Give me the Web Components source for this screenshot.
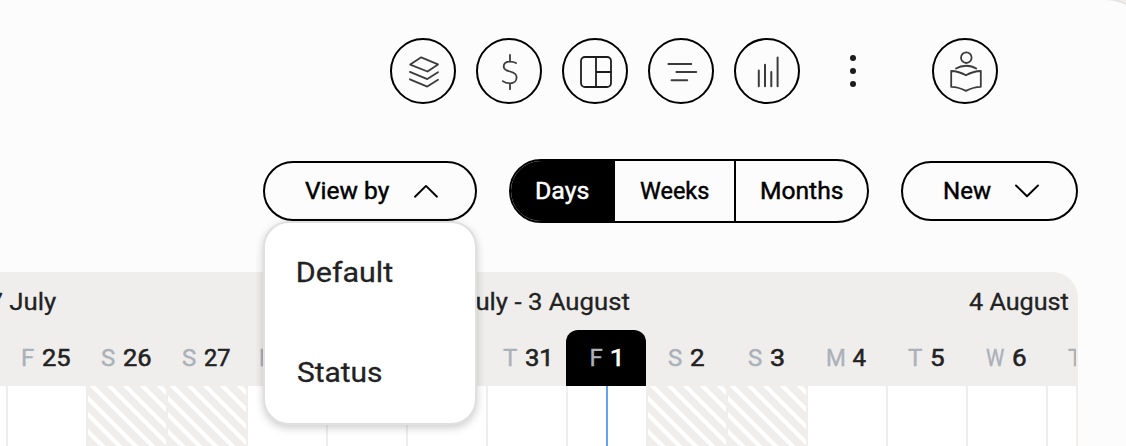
<!DOCTYPE html>
<html lang="en">
<head>
<meta charset="utf-8">
<title>Schedule</title>
<style>
html,body{margin:0;height:100%;overflow:hidden;background:#f3f0ec}
body{font-family:Roboto,"Liberation Sans",sans-serif;color:#000}
</style>
</head>
<body>
<schedule-page></schedule-page>
<script>
const ctx = document.createElement('canvas').getContext('2d');
const define = (name, html, setup) => customElements.define(name, class extends HTMLElement {
  connectedCallback() {
    if (this.shadowRoot) return;
    const t = document.createElement('template');
    t.innerHTML = typeof html === 'function' ? html(this) : html;
    this.attachShadow({mode: 'open'}).append(t.content.cloneNode(true));
    if (setup) setup(this);
  }
});

// Single-line label widened so that its glyphs span the given width.
define('fit-label', `<style>:host{display:block;white-space:pre;flex:none;-webkit-text-stroke:.3px currentColor}span{display:block;width:max-content;transform-origin:0 50%}</style><span><slot></slot></span>`, el => {
  const s = getComputedStyle(el), text = el.textContent, w = +el.getAttribute('w');
  ctx.font = `${s.fontWeight} ${s.fontSize} ${s.fontFamily}`;
  const m = ctx.measureText(text), ink = m.actualBoundingBoxRight + m.actualBoundingBoxLeft;
  const k = Math.min(w / ink, 1.12);
  el.style.width = w + 'px';
  el.shadowRoot.querySelector('span').style.transform = `scaleX(${k}) translateX(${m.actualBoundingBoxLeft}px)`;
});

define('round-button', `<style>
:host{display:flex;box-sizing:border-box;width:66px;height:66px;border:2px solid #000;border-radius:50%;flex:none}
</style><slot></slot>`);

define('line-icon', el => `<style>:host{display:block}svg{display:block;fill:none;stroke:#3c3c3c;stroke-width:1.8;stroke-linecap:round;stroke-linejoin:round}</style>
<svg width="62" height="62" viewBox="2 2 62 62">${{
  layers: '<path d="M31.2 19.3 48 26.4 37.5 33.5 20.2 26.6ZM19.9 33.9 37.3 41.1 48 34.2M19.9 41.3 37.3 48.6 48 41.8"/>',
  dollar: '<path d="M34 17V23.4M34 45.6V51.2M40 25C38 23.9 36 23.6 34 23.6C30 23.6 27.7 25.6 27.7 28.4C27.7 31.5 30.2 32.5 34 33.5C38.2 34.6 40.6 35.8 40.6 39.2C40.6 42.8 38 45.3 34 45.3C31 45.3 28.5 44.6 26.8 43.1"/>',
  layout: '<g stroke="#1c1c1c" stroke-width="1.8"><rect x="19" y="19" width="30" height="30" rx="4"/><path d="M34 19V49M34 34H49"/></g>',
  lines: '<path stroke-width="2" d="M20.4 26H43.2M28.4 34H48.2M23.6 42.3H39.2"/>',
  bars: '<path stroke-width="2" d="M24.8 32.4V48.2M31 26.7V48.2M37.3 34.1V48.2M43.6 19.6V48.2"/>',
  reader: '<circle cx="34.3" cy="19.7" r="5.3"/><path d="M24 30.6C30 26.8 38.6 26.8 44.2 30.6M19.2 33Q27 33.2 33.9 37.3Q41 33.2 48.8 33V48.8Q41 49 33.9 52.9Q27 49 19.2 48.8Z"/>'
}[el.getAttribute('name')]}</svg>`);

define('more-dots', `<style>:host{display:flex;flex-direction:column;align-items:center;justify-content:center;gap:6.4px;width:66px;height:66px}
i{width:6.4px;height:6.4px;border-radius:50%;background:#1c1c1c}</style><i></i><i></i><i></i>`);

define('drop-button', el => `<style>
:host{display:flex;box-sizing:border-box;align-items:center;height:60px;padding-left:40px;border:2px solid #000;border-radius:30px;font-size:24px;line-height:28px;flex:none}
svg{display:block;margin-left:23px;fill:none;stroke:#000;stroke-width:1.9;stroke-linecap:round;stroke-linejoin:round}
::slotted(fit-label){-webkit-text-stroke:.45px #000}
</style><slot></slot><svg width="26" height="16" viewBox="0 0 26 16"><path d="${el.hasAttribute('open') ? 'M2 13.7 13 2.9 24 13.7' : 'M2 2.5 13 13.2 24 2.5'}"/></svg>`);

define('drop-menu', `<style>
:host{position:absolute;left:0;top:60px;box-sizing:border-box;width:214px;height:204px;padding:33px 0 0 33px;border:2px solid #e0e0e0;border-radius:26px;background:#fff;background-clip:padding-box;box-shadow:0 3px 8px rgba(0,0,0,.2);color:#222;font-size:28px;line-height:33px;z-index:3;display:flex;flex-direction:column;gap:67px}
</style><slot></slot>`);

define('view-switch', `<style>
:host{display:flex;box-sizing:border-box;width:360px;height:64px;border:2px solid #000;border-radius:32px;overflow:hidden;font-size:24px;line-height:28px}
div{box-sizing:border-box;display:flex;align-items:center}
fit-label{-webkit-text-stroke:.45px currentColor}
.a{width:104px;padding-left:25px;background:#000;color:#fff}.b{width:121px;border-right:2px solid #000;padding-left:25px}.c{flex:1;padding-left:25px}
</style><div class="a"><fit-label w="53">Days</fit-label></div><div class="b"><fit-label w="69">Weeks</fit-label></div><div class="c"><fit-label w="82">Months</fit-label></div>`);

define('day-head', el => {
  const [l, n] = el.getAttribute('day').split(' ');
  const lw = {F:12,S:14,M:17,T:14,W:18}[l];
  const nw = n.length > 1 ? (n === '31' ? 23 : n === '27' ? 25 : 27) : (n === '1' ? 10 : 13);
  return `<style>
:host{box-sizing:border-box;display:flex;justify-content:center;align-items:center;gap:9px;width:80px;height:56px;flex:none;font-size:24px;line-height:28px;color:#222}
:host([today]){background:#000;color:#fff;border-radius:12px 12px 0 0}
.l{color:#abb1b8;-webkit-text-stroke:.4px currentColor}
.n{-webkit-text-stroke:.55px currentColor}
</style><fit-label class="l" w="${lw}">${l}</fit-label><fit-label class="n" w="${nw}">${n}</fit-label>`;
});

define('day-cell', `<style>
:host{box-sizing:border-box;width:80px;height:60px;border-right:2px solid #efeeec;flex:none;background:#fff;display:flex;justify-content:center}
:host([off]){background:repeating-linear-gradient(45deg,#fff 0 .5px,#efeeec .5px 8.1px,#fff 8.1px 11.8px)}
i{display:none;width:2px;height:60px;background:#63a4f2}
:host([today]) i{display:block}
</style><i></i>`);

define('day-grid', () => {
  const days = ['T 24','F 25','S 26','S 27','M 28','T 29','W 30','T 31','F 1','S 2','S 3','M 4','T 5','W 6','T 7'];
  const mark = d => /^S/.test(d) ? ' off' : d === 'F 1' ? ' today' : '';
  return `<style>
:host{display:block;box-sizing:border-box;width:1078px;height:174px;border-right:2px solid #efeeec;border-radius:0 26px 0 0;overflow:hidden;background:#efeeec}
.weeks{display:flex;height:58px;align-items:center;font-size:24px;line-height:28px;color:#222;padding-top:1px;box-sizing:border-box}
.w1{width:57px;display:flex;justify-content:flex-end}
.w2{width:573px;display:flex;justify-content:flex-end}
.w3{margin-left:339px}
.row{display:flex;margin-left:-74px}
.cells{margin-left:-72px}
</style>
<div class="weeks"><div class="w1"><fit-label w="82">27 July</fit-label></div><div class="w2"><fit-label w="203">28 July - 3 August</fit-label></div><fit-label class="w3" w="100">4 August</fit-label></div>
<div class="row">${days.map(d => `<day-head day="${d}"${mark(d)}></day-head>`).join('')}</div>
<div class="row cells">${days.map(d => `<day-cell${mark(d)}></day-cell>`).join('')}</div>`;
});

define('schedule-page', `<style>
:host{display:block;box-sizing:border-box;width:1146px;height:446px;background:#fcfcfc;border-radius:0 40px 0 0;box-shadow:0 0 0 2px #e4e3e2;overflow:hidden}
.tools{display:flex;gap:20px;padding:38px 0 0 390px}
.tools .last{margin-left:26px}
.bar{display:flex;align-items:center;gap:32px;padding:55px 0 0 263px}
.view{position:relative}
.view drop-button{width:214px}
.new{width:177px;padding-left:41px}
day-grid{margin-top:49px}
</style>
<div class="tools">
<round-button><line-icon name="layers"></line-icon></round-button>
<round-button><line-icon name="dollar"></line-icon></round-button>
<round-button><line-icon name="layout"></line-icon></round-button>
<round-button><line-icon name="lines"></line-icon></round-button>
<round-button><line-icon name="bars"></line-icon></round-button>
<more-dots></more-dots>
<round-button class="last"><line-icon name="reader"></line-icon></round-button>
</div>
<div class="bar">
<div class="view"><drop-button open><fit-label w="85">View by</fit-label></drop-button>
<drop-menu><fit-label w="95">Default</fit-label><fit-label w="84">Status</fit-label></drop-menu></div>
<view-switch></view-switch>
<drop-button class="new"><fit-label w="47">New</fit-label></drop-button>
</div>
<day-grid></day-grid>`);
</script>
</body>
</html>
